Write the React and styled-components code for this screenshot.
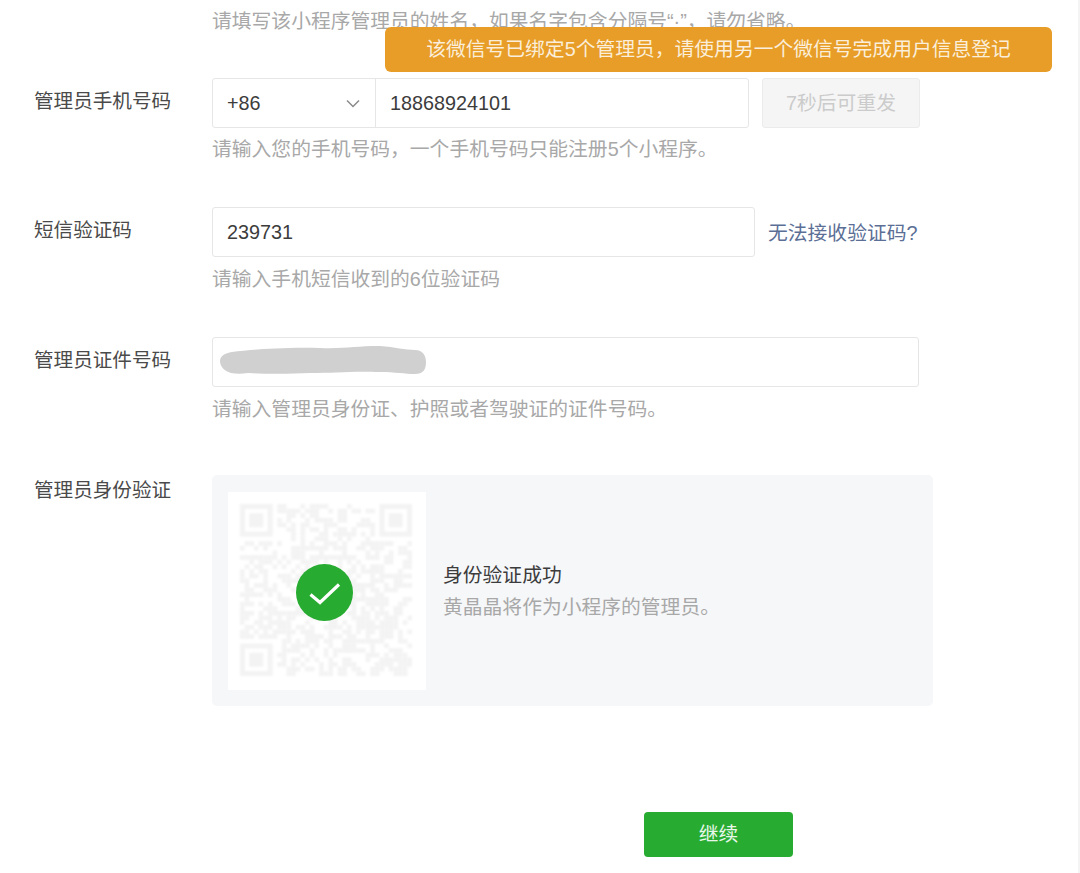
import React from 'react';
import styled, { createGlobalStyle } from 'styled-components';

const Global = createGlobalStyle`
  html, body { margin: 0; padding: 0; background: #fff; }
  body {
    font-family: "Liberation Sans", "Noto Sans CJK SC", sans-serif;
    font-size: 19.8px;
    color: #353535;
  }
`;

const Page = styled.div`
  position: relative;
  box-sizing: border-box;
  width: 1080px;
  height: 873px;
  overflow: hidden;
  padding: 6px 0 0 34px;
  border-right: 2px solid #f4f4f4;
`;

const Toast = styled.div`
  position: absolute;
  left: 385px;
  top: 27px;
  width: 667px;
  height: 45px;
  line-height: 44px;
  text-align: center;
  background: #e79d27;
  color: #fbeeda;
  border-radius: 6px;
`;

const Row = styled.div`
  display: flex;
  margin-bottom: ${p => p.$gap}px;
`;

const Label = styled.div`
  width: 178px;
  flex: none;
  line-height: ${p => p.$lh || 47}px;
  color: #4a4a4a;
  font-size: 19.6px;
`;

const Field = styled.div`
  display: flex;
  flex-direction: column;
`;

const Controls = styled.div`
  display: flex;
  align-items: center;
  height: 50px;
`;

const Hint = styled.div`
  line-height: 30px;
  margin-top: ${p => p.$top || 6}px;
  color: #a8a8a8;
  white-space: nowrap;
`;

const TopHint = styled(Hint)`
  margin: 0 0 0 178px;
  height: 72px;
`;

const Input = styled.div`
  box-sizing: border-box;
  width: ${p => p.$w}px;
  height: 50px;
  line-height: 48px;
  padding: 0 14px;
  border: 1px solid #e6e6e6;
  border-radius: 3px;
  color: #3c3c3c;
`;

const PhoneGroup = styled.div`
  display: flex;
  width: 537px;
  height: 50px;
  box-sizing: border-box;
  border: 1px solid #e6e6e6;
  border-radius: 3px;
`;

const Prefix = styled.div`
  display: flex;
  align-items: center;
  justify-content: space-between;
  box-sizing: border-box;
  width: 163px;
  padding: 0 15px 0 14px;
  border-right: 1px solid #e6e6e6;
  color: #3c3c3c;
`;

const PhoneNumber = styled.div`
  line-height: 48px;
  padding-left: 14px;
  color: #3c3c3c;
`;

const ResendButton = styled.div`
  box-sizing: border-box;
  width: 158px;
  height: 50px;
  margin-left: 13px;
  line-height: 48px;
  text-align: center;
  background: #f5f5f5;
  border: 1px solid #ebebeb;
  border-radius: 3px;
  color: #cbcbcb;
`;

const HelpLink = styled.span`
  margin: -2px 0 0 13px;
  color: #5b6f96;
`;

const VerifyBox = styled.div`
  display: flex;
  align-items: center;
  box-sizing: border-box;
  width: 721px;
  height: 231px;
  padding: 0 16px;
  background: #f6f7f9;
  border-radius: 5px;
`;

const QrCard = styled.div`
  position: relative;
  width: 198px;
  height: 198px;
  flex: none;
  background: #fff;
`;

const QrImage = styled.svg`
  display: block;
  width: 198px;
  height: 198px;
  filter: blur(0.8px);
`;

const SuccessBadge = styled.svg`
  position: absolute;
  left: 68px;
  top: 72px;
  width: 57px;
  height: 57px;
`;

const Result = styled.div`
  margin-left: 17px;
  line-height: 32px;
`;

const ResultTitle = styled.div`
  color: #3c3c3c;
`;

const ResultSub = styled.div`
  color: #a8a8a8;
`;

const Actions = styled.div`
  display: flex;
  margin: 106px 0 0 610px;
`;

const NextButton = styled.div`
  width: 149px;
  height: 45px;
  line-height: 44px;
  text-align: center;
  background: #27ab30;
  color: #e8f7e9;
  border-radius: 4px;
`;

// QR placeholder: deterministic modules, with the three finder squares
const QR_SIZE = 37;
const CELL = 4.65;
const QR_INK = '#f3f3f4';

function inFinder(x, y) {
  const near = v => v < 8;
  const far = v => v >= QR_SIZE - 8;
  return (near(x) && near(y)) || (far(x) && near(y)) || (near(x) && far(y));
}

function qrCells() {
  const cells = [];
  let seed = 73;
  for (let y = 0; y < QR_SIZE; y++) {
    for (let x = 0; x < QR_SIZE; x++) {
      seed = (seed * 1103515245 + 12345) & 0x7fffffff;
      if (!inFinder(x, y) && (seed >> 16) % 100 < 50) cells.push([x, y]);
    }
  }
  return cells;
}

function Finder({ x, y }) {
  return (
    <g transform={`translate(${x} ${y})`} fill="none" stroke={QR_INK}>
      <rect x={2.5} y={2.5} width={CELL * 7 - 5} height={CELL * 7 - 5} strokeWidth={5} />
      <rect x={CELL * 2} y={CELL * 2} width={CELL * 3} height={CELL * 3} fill={QR_INK} stroke="none" />
    </g>
  );
}

function QrCode() {
  const cells = React.useMemo(qrCells, []);
  const origin = 12;
  return (
    <QrCard>
      <QrImage viewBox="0 0 198 198">
        <g transform={`translate(${origin} ${origin})`}>
          {cells.map(([x, y]) => (
            <rect key={`${x}-${y}`} x={x * CELL} y={y * CELL} width={CELL} height={CELL} fill={QR_INK} />
          ))}
          <Finder x={0} y={0} />
          <Finder x={(QR_SIZE - 7) * CELL} y={0} />
          <Finder x={0} y={(QR_SIZE - 7) * CELL} />
        </g>
      </QrImage>
      <SuccessBadge viewBox="0 0 57 57">
        <circle cx="28.5" cy="28.5" r="28.5" fill="#27ab30" />
        <path d="M14.5 30.5l9.5 8L43 20.5" fill="none" stroke="#fff" strokeWidth="3.2" />
      </SuccessBadge>
    </QrCard>
  );
}

function Chevron() {
  return (
    <svg width="14" height="9" viewBox="0 0 14 9">
      <path d="M1 1.5l6 6 6-6" fill="none" stroke="#8a8a8a" strokeWidth="1.5" />
    </svg>
  );
}

const SmudgeSvg = styled.svg`
  display: block;
  margin: 8px 0 0 -7px;
  filter: blur(0.6px);
`;

function Smudge() {
  return (
    <SmudgeSvg width="206" height="30" viewBox="0 0 206 30">
      <path
        d="M12 6C30 4 60 1 100 2C125 3 135 0 160 0C175 1 185 4 195 4C203 4 206 10 206 16C206 24 203 28 195 28C185 28 175 26 160 26C130 25 115 27 90 27C70 28 45 28 28 27C22 28 16 28 11 27C4 25 0 20 0 15C0 10 5 7 12 6Z"
        fill="#d0d0d0"
      />
    </SmudgeSvg>
  );
}

export default function App() {
  return (
    <>
      <Global />
      <Page>
        <TopHint>请填写该小程序管理员的姓名，如果名字包含分隔号“·”，请勿省略。</TopHint>
        <Toast>该微信号已绑定5个管理员，请使用另一个微信号完成用户信息登记</Toast>

        <Row $gap={43}>
          <Label>管理员手机号码</Label>
          <Field>
            <Controls>
              <PhoneGroup>
                <Prefix>+86<Chevron /></Prefix>
                <PhoneNumber>18868924101</PhoneNumber>
              </PhoneGroup>
              <ResendButton>7秒后可重发</ResendButton>
            </Controls>
            <Hint>请输入您的手机号码，一个手机号码只能注册5个小程序。</Hint>
          </Field>
        </Row>

        <Row $gap={43}>
          <Label>短信验证码</Label>
          <Field>
            <Controls>
              <Input $w={543}>239731</Input>
              <HelpLink>无法接收验证码?</HelpLink>
            </Controls>
            <Hint $top={7}>请输入手机短信收到的6位验证码</Hint>
          </Field>
        </Row>

        <Row $gap={51}>
          <Label>管理员证件号码</Label>
          <Field>
            <Controls>
              <Input $w={707}><Smudge /></Input>
            </Controls>
            <Hint $top={7}>请输入管理员身份证、护照或者驾驶证的证件号码。</Hint>
          </Field>
        </Row>

        <Row $gap={0}>
          <Label $lh={30}>管理员身份验证</Label>
          <VerifyBox>
            <QrCode />
            <Result>
              <ResultTitle>身份验证成功</ResultTitle>
              <ResultSub>黄晶晶将作为小程序的管理员。</ResultSub>
            </Result>
          </VerifyBox>
        </Row>

        <Actions>
          <NextButton>继续</NextButton>
        </Actions>
      </Page>
    </>
  );
}
